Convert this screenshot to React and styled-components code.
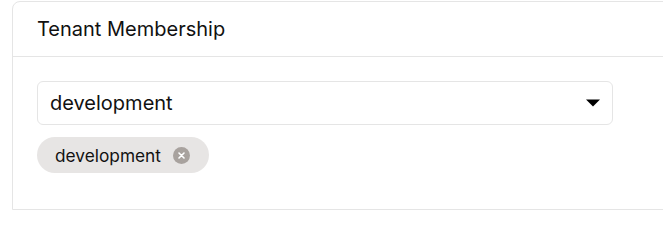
import React from "react";
import styled, { createGlobalStyle } from "styled-components";

const Global = createGlobalStyle`
  html, body { margin: 0; padding: 0; background: #fff; overflow: hidden; }
  body { font-family: Inter, "Noto Sans", sans-serif; color: #111; }
`;

const Page = styled.div`
  padding: 1px 0 0 12px;
  width: 720px;
`;

const Card = styled.section`
  width: 700px;
  border: 1px solid #e5e5e5;
  border-radius: 8px 8px 0 0;
  background: #fff;
`;

const Header = styled.header`
  height: 54px;
  display: flex;
  align-items: center;
  padding: 0 24px;
  border-bottom: 1px solid #e5e5e5;
`;

const Title = styled.h2`
  margin: 0;
  font-size: 20px;
  font-weight: 400;
  color: #111;
`;

const Body = styled.div`
  padding: 24px 24px 36px;
  display: flex;
  flex-direction: column;
  align-items: flex-start;
  gap: 12px;
`;

const Select = styled.div`
  box-sizing: border-box;
  width: 576px;
  height: 44px;
  border: 1px solid #e5e5e5;
  border-radius: 6px;
  display: flex;
  align-items: center;
  justify-content: space-between;
  padding: 0 12px 0 12px;
  font-size: 20px;
  color: #111;
`;

const Caret = styled.svg`
  width: 14px;
  height: 8px;
  display: block;
`;

const Chip = styled.div`
  height: 36px;
  box-sizing: border-box;
  display: inline-flex;
  align-items: center;
  gap: 12px;
  padding: 0 19px 0 18px;
  border-radius: 18px;
  background: #e7e5e4;
  font-size: 17.3px;
  color: #111;
`;

const Remove = styled.span`
  width: 17px;
  height: 17px;
  border-radius: 50%;
  background: #a8a29e;
  display: inline-flex;
  align-items: center;
  justify-content: center;
`;

export default function App() {
  return (
    <>
      <Global />
      <Page>
        <Card>
          <Header>
            <Title>Tenant Membership</Title>
          </Header>
          <Body>
            <Select>
              <span>development</span>
              <Caret viewBox="0 0 14 8">
                <path d="M0 0.5 L14 0.5 L7 7.5 Z" fill="#000" />
              </Caret>
            </Select>
            <Chip>
              <span>development</span>
              <Remove>
                <svg width="7" height="7" viewBox="0 0 7 7">
                  <path d="M1 1 L6 6 M6 1 L1 6" stroke="#fff" strokeWidth="1.6" strokeLinecap="round" />
                </svg>
              </Remove>
            </Chip>
          </Body>
        </Card>
      </Page>
    </>
  );
}
